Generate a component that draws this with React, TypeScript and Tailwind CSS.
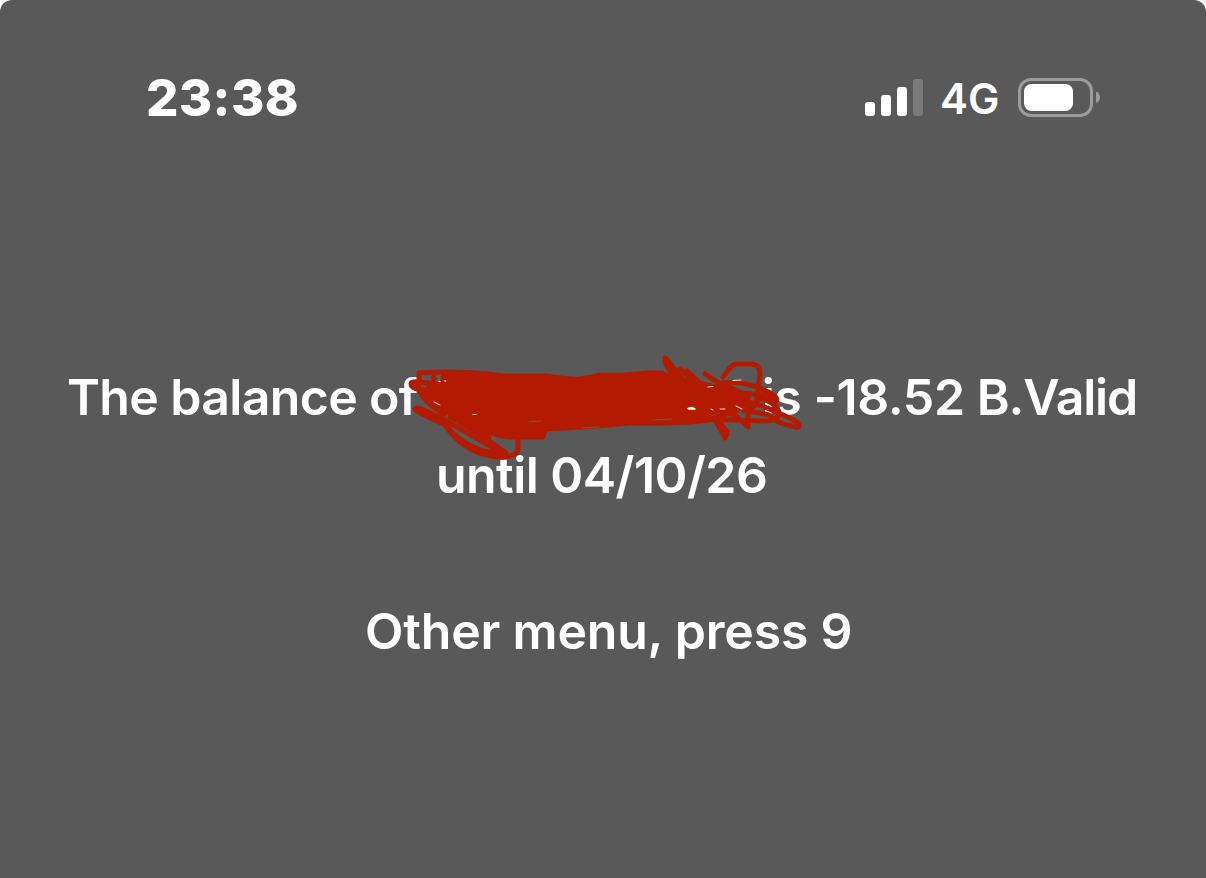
function SignalBars() {
  return (
    <div className="flex h-[37px] items-end gap-1.5">
      <div className="h-[14px] w-2.5 rounded-[3px] bg-white" />
      <div className="h-[21px] w-2.5 rounded-[3px] bg-white" />
      <div className="h-[29px] w-2.5 rounded-[3px] bg-white" />
      <div className="h-[37px] w-2.5 rounded-[3px] bg-[#7a7a7a]" />
    </div>
  )
}

function Battery() {
  return (
    <svg className="h-10 w-[84px]" viewBox="0 0 84 40" fill="none">
      <rect x="2.5" y="2.5" width="72" height="36" rx="11.5" stroke="#9b9b9b" strokeWidth="3" />
      <rect x="7" y="7" width="49" height="27" rx="7.5" fill="white" />
      <path d="M79 14.5C84.300 16.500 84.300 24 79 26Z" fill="#9b9b9b" />
    </svg>
  )
}

function StatusBar() {
  return (
    <header className="flex h-[117px] items-end justify-between pr-[105px] pl-[146px]">
      <span className="h-11 text-[51px] leading-[49px] font-extrabold tracking-[0.3px]">23:38</span>
      <div className="flex h-10 items-center">
        <SignalBars />
        <span className="ml-[17px] w-[60px] pt-1 text-[42px] leading-10 font-semibold whitespace-nowrap">4G</span>
        <div className="ml-[17px]">
          <Battery />
        </div>
      </div>
    </header>
  )
}

function Scribble() {
  return (
    <svg
      className="absolute top-[-8px] left-[400px] h-[120px] w-[410px]"
      viewBox="400 350 410 120"
      fill="none"
      strokeLinecap="round"
      strokeLinejoin="round"
    >
      <g stroke="#b31b00" strokeWidth="5">
        <path
          d="M444 373C462 371 485 374 505 376H547C560 378 568 380 580 379L600 375.500L625 375L648 373H662L674 379L690 381L715 387H729L742 393L744 405L735 411L721 416L710 420L690 422L665 423L630 423C605 425 575 428 545 429L543 437H508C498 436 490 433 480 429L470 423L445 410L434 403L424 392L434 384L442 386Z"
          fill="#b31b00"
        />
        <path d="M419 388V373C440 371 465 372 490 374M421 382.500L441 384M434 374V384" />
        <path d="M438 386C425 382 411 380 411 384C411 389 423 392 438 389M418 386C421 399 433 408 445 414" />
        <path d="M441 418C430 413 418 406 415 409C418 413 430 418 444 424C455 440 471 453 492 456C503 459 518 456 518 449V436" />
        <path d="M440 416C449 434 469 447 484 451L506 455L443 419" />
        <path d="M450 417C468 425 487 440 506 453M475 424L489 438" />
        <path d="M598 375L604 375.500M665 358C664 367 676 379 691 392L715 419L725 438L727 431C722 427 716 417 703 405M665 358C668 359 674 371 685 381" />
        <path d="M680 369L720 403M687 371L725 407M705 374L728 389L742 398" />
        <path d="M712 413L720 429M715 413L727 434" />
        <path d="M723 377C728 371 730 364 738 364H750C757 364 760 367 760 374L757 396C757 405 753 410 744 411" />
        <path d="M722 383C739 380 760 387 770 393C777 397 778 400 776 401L764 395L741 393" />
        <path d="M736 400C747 401 763 406 772 410L792 419C800 423 801 428 796 427C786 425 777 423 769 415L748 411" />
        <path d="M758 399C768 399 777 405 779 412C779 419 773 421 763 421L734 420L705 419" />
        <path d="M748 397V427L737 417L724 409M730 391L738 400M716 397L743 406" />
      </g>
      <path d="M529 422L541 421M582 428L599 427M652 420L672 419M711 416L719 413" stroke="#85503f" strokeWidth="1" />
      <g stroke="white" strokeWidth="1">
        <path d="M434 402L440 405M473 414.500H476M733 380.500L741 380M711 409L713 410M720 409L725 409M736 406L742 409M708 387L713 386.500" opacity="0.85" />
        <path d="M688 408.500L692 407.500L695 409H689Z" fill="white" strokeWidth="1.5" />
        <path d="M439 381.500H440M445 381H445.500" strokeWidth="1.5" />
      </g>
    </svg>
  )
}

export default function App() {
  return (
    <div className="bg-white">
      <div className="h-[878px] w-[1206px] overflow-hidden rounded-t-[12px] bg-[#595959] font-['Inter',sans-serif] text-white">
        <StatusBar />
        <main className="relative mt-[241px] text-[50px] leading-[78px] font-semibold whitespace-nowrap">
          <div className="flex justify-between pr-[69px] pl-[67px]">
            <span className="tracking-[-0.65px]">The balance of</span>
            <span className="tracking-[-0.4px]">
              is -18.52 <span className="tracking-[-1.2px]">B.Valid</span>
            </span>
          </div>
          <p className="pl-[436px] tracking-[-0.55px]">until 04/10/26</p>
          <p className="mt-[78px] pl-[365px] tracking-[-0.2px]">Other menu, press 9</p>
          <Scribble />
        </main>
      </div>
    </div>
  )
}
